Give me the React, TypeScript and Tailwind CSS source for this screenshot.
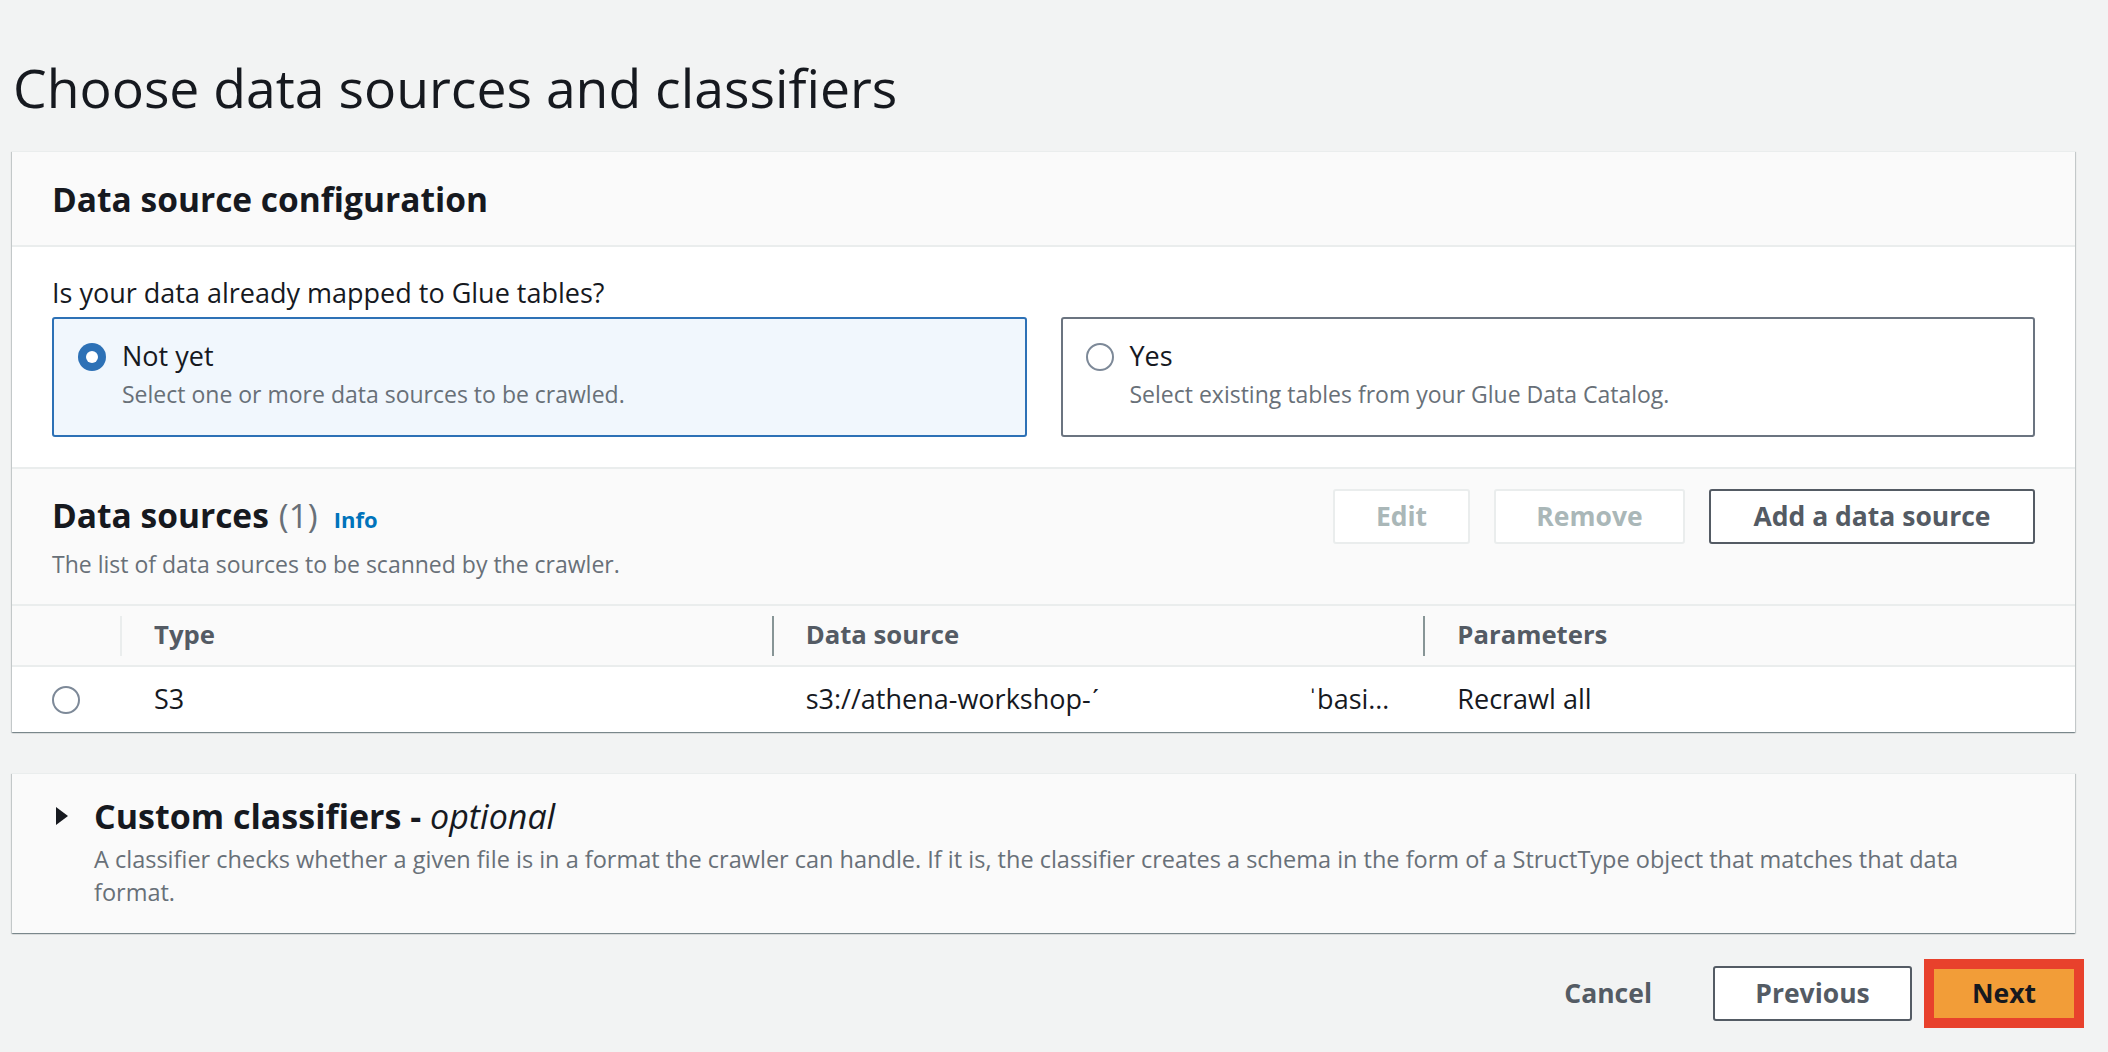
import React from "react";

const cardShadow =
  "shadow-[0_1px_1px_0_rgba(0,28,36,0.3),1px_1px_1px_0_rgba(0,28,36,0.15),-1px_1px_1px_0_rgba(0,28,36,0.15)]";

function RadioSelected() {
  return (
    <span className="flex h-[28px] w-[28px] shrink-0 items-center justify-center rounded-full bg-[#2d71b6]">
      <span className="h-[12px] w-[12px] rounded-full bg-white" />
    </span>
  );
}

function RadioEmpty() {
  return <span className="block h-[28px] w-[28px] shrink-0 rounded-full border-2 border-[#7d8998] bg-white" />;
}

function Tile({
  selected,
  label,
  desc,
}: {
  selected: boolean;
  label: string;
  desc: string;
}) {
  return (
    <div
      className={
        selected
          ? "flex h-[120px] items-start gap-[16px] rounded-[3px] border-2 border-[#2d71b6] bg-[#f1f7fd] pl-[24px] pt-[20px]"
          : "flex h-[120px] items-start gap-[16px] rounded-[3px] border-2 border-[#6b7480] bg-white pl-[23px] pt-[20px]"
      }
    >
      <div className="mt-[4px]">{selected ? <RadioSelected /> : <RadioEmpty />}</div>
      <div className="flex flex-col gap-[6px]">
        <div className="text-[27px] leading-[34px] text-[#16191f]">{label}</div>
        <div className="text-[23px] leading-[30px] text-[#687078]">{desc}</div>
      </div>
    </div>
  );
}

function HeaderCell({ label, light }: { label: string; light?: boolean }) {
  return (
    <div className="flex h-full items-center">
      <span className={light ? "h-[40px] w-[2px] bg-[#eaeded]" : "h-[40px] w-[2px] bg-[#879596]"} />
      <span className="ml-[32px] text-[25.7px] font-bold text-[#545b64]">{label}</span>
    </div>
  );
}

export default function App() {
  return (
    <div className="min-h-[1052px] w-full bg-[#f2f3f3] pl-[12px] pr-[33px] font-['Open_Sans',sans-serif] text-[#16191f]">
      <h1 className="pt-[56px] pl-[1px] text-[53.5px] font-normal leading-[64px] text-[#16191f]">
        Choose data sources and classifiers
      </h1>

      <section className={`mt-[31px] border-t border-[#eaeded] bg-white ${cardShadow}`}>
        <div className="flex h-[95px] items-center border-b-2 border-[#eaeded] bg-[#fafafa] px-[40px]">
          <h2 className="text-[33.5px] font-bold leading-[46px]">Data source configuration</h2>
        </div>

        <div className="bg-white px-[40px] pb-[30px] pt-[29px]">
          <p className="text-[27px] leading-[34px] text-[#16191f]">Is your data already mapped to Glue tables?</p>
          <div className="mt-[7px] grid grid-cols-2 gap-[34px]">
            <Tile selected label="Not yet" desc="Select one or more data sources to be crawled." />
            <Tile selected={false} label="Yes" desc="Select existing tables from your Glue Data Catalog." />
          </div>
        </div>

        <div className="border-t-2 border-[#eaeded] bg-[#fafafa]">
          <div className="flex items-start justify-between px-[40px] pb-[25px] pt-[20px]">
            <div className="flex flex-col">
              <div className="mt-[3px] flex items-baseline">
                <h2 className="text-[33.5px] font-bold leading-[46px]">Data sources</h2>
                <span className="ml-[10px] text-[33.5px] leading-[46px] text-[#687078]">(1)</span>
                <span className="ml-[16px] text-[22px] font-bold text-[#0073bb]">Info</span>
              </div>
              <p className="mt-[11px] text-[23px] leading-[30px] text-[#687078]">
                The list of data sources to be scanned by the crawler.
              </p>
            </div>
            <div className="flex items-center gap-[24px]">
              <button className="flex h-[55px] w-[137px] items-center justify-center rounded-[3px] border-2 border-[#eaeded] bg-white text-[26.5px] font-bold text-[#aab7b8]">
                Edit
              </button>
              <button className="flex h-[55px] w-[191px] items-center justify-center rounded-[3px] border-2 border-[#eaeded] bg-white text-[26.5px] font-bold text-[#aab7b8]">
                Remove
              </button>
              <button className="flex h-[55px] w-[326px] items-center justify-center rounded-[3px] border-2 border-[#545b64] bg-white text-[26.5px] font-bold text-[#545b64]">
                Add a data source
              </button>
            </div>
          </div>

          <div className="grid h-[63px] grid-cols-[108px_1fr_1fr_1fr] border-y-2 border-[#eaeded] bg-[#fafafa]">
            <div />
            <HeaderCell label="Type" light />
            <HeaderCell label="Data source" />
            <HeaderCell label="Parameters" />
          </div>

          <div className="grid h-[65px] grid-cols-[108px_1fr_1fr_1fr] items-center bg-white text-[27px] text-[#16191f]">
            <div className="pl-[40px]">
              <RadioEmpty />
            </div>
            <div className="pl-[34px]">S3</div>
            <div className="flex justify-between px-[34px]">
              <span>s3://athena-workshop-ˊ</span>
              <span>ˈbasi…</span>
            </div>
            <div className="pl-[34px]">Recrawl all</div>
          </div>
        </div>
      </section>

      <section className={`mt-[41px] border-t border-[#eaeded] bg-[#fafafa] pb-[24px] pl-[42px] pr-[40px] pt-[19px] ${cardShadow}`}>
        <div className="flex items-center gap-[24px]">
          <svg width="16" height="20" viewBox="0 0 16 20" className="shrink-0">
            <path d="M2 1 L14 10 L2 19 Z" fill="#16191f" />
          </svg>
          <h2 className="text-[34px] font-bold leading-[46px]">
            Custom classifiers - <span className="font-normal italic">optional</span>
          </h2>
        </div>
        <p className="ml-[40px] mt-[4px] max-w-[1896px] text-[23.5px] leading-[33px] text-[#687078]">
          A classifier checks whether a given file is in a format the crawler can handle. If it is, the classifier creates a schema in the form of a StructType object that matches that data format.
        </p>
      </section>

      <div className="mr-[-9px] mt-[26px] flex items-center justify-end">
        <button className="mr-[61px] text-[26.5px] font-bold text-[#545b64]">Cancel</button>
        <button className="flex h-[55px] w-[199px] items-center justify-center rounded-[3px] border-2 border-[#545b64] bg-white text-[26.5px] font-bold text-[#545b64]">
          Previous
        </button>
        <div className="ml-[12px] flex h-[69px] w-[160px] items-center justify-center border-[10px] border-[#e8412c] bg-[#f29d38] text-[26.5px] font-bold text-[#16191f]">
          Next
        </div>
      </div>
    </div>
  );
}
